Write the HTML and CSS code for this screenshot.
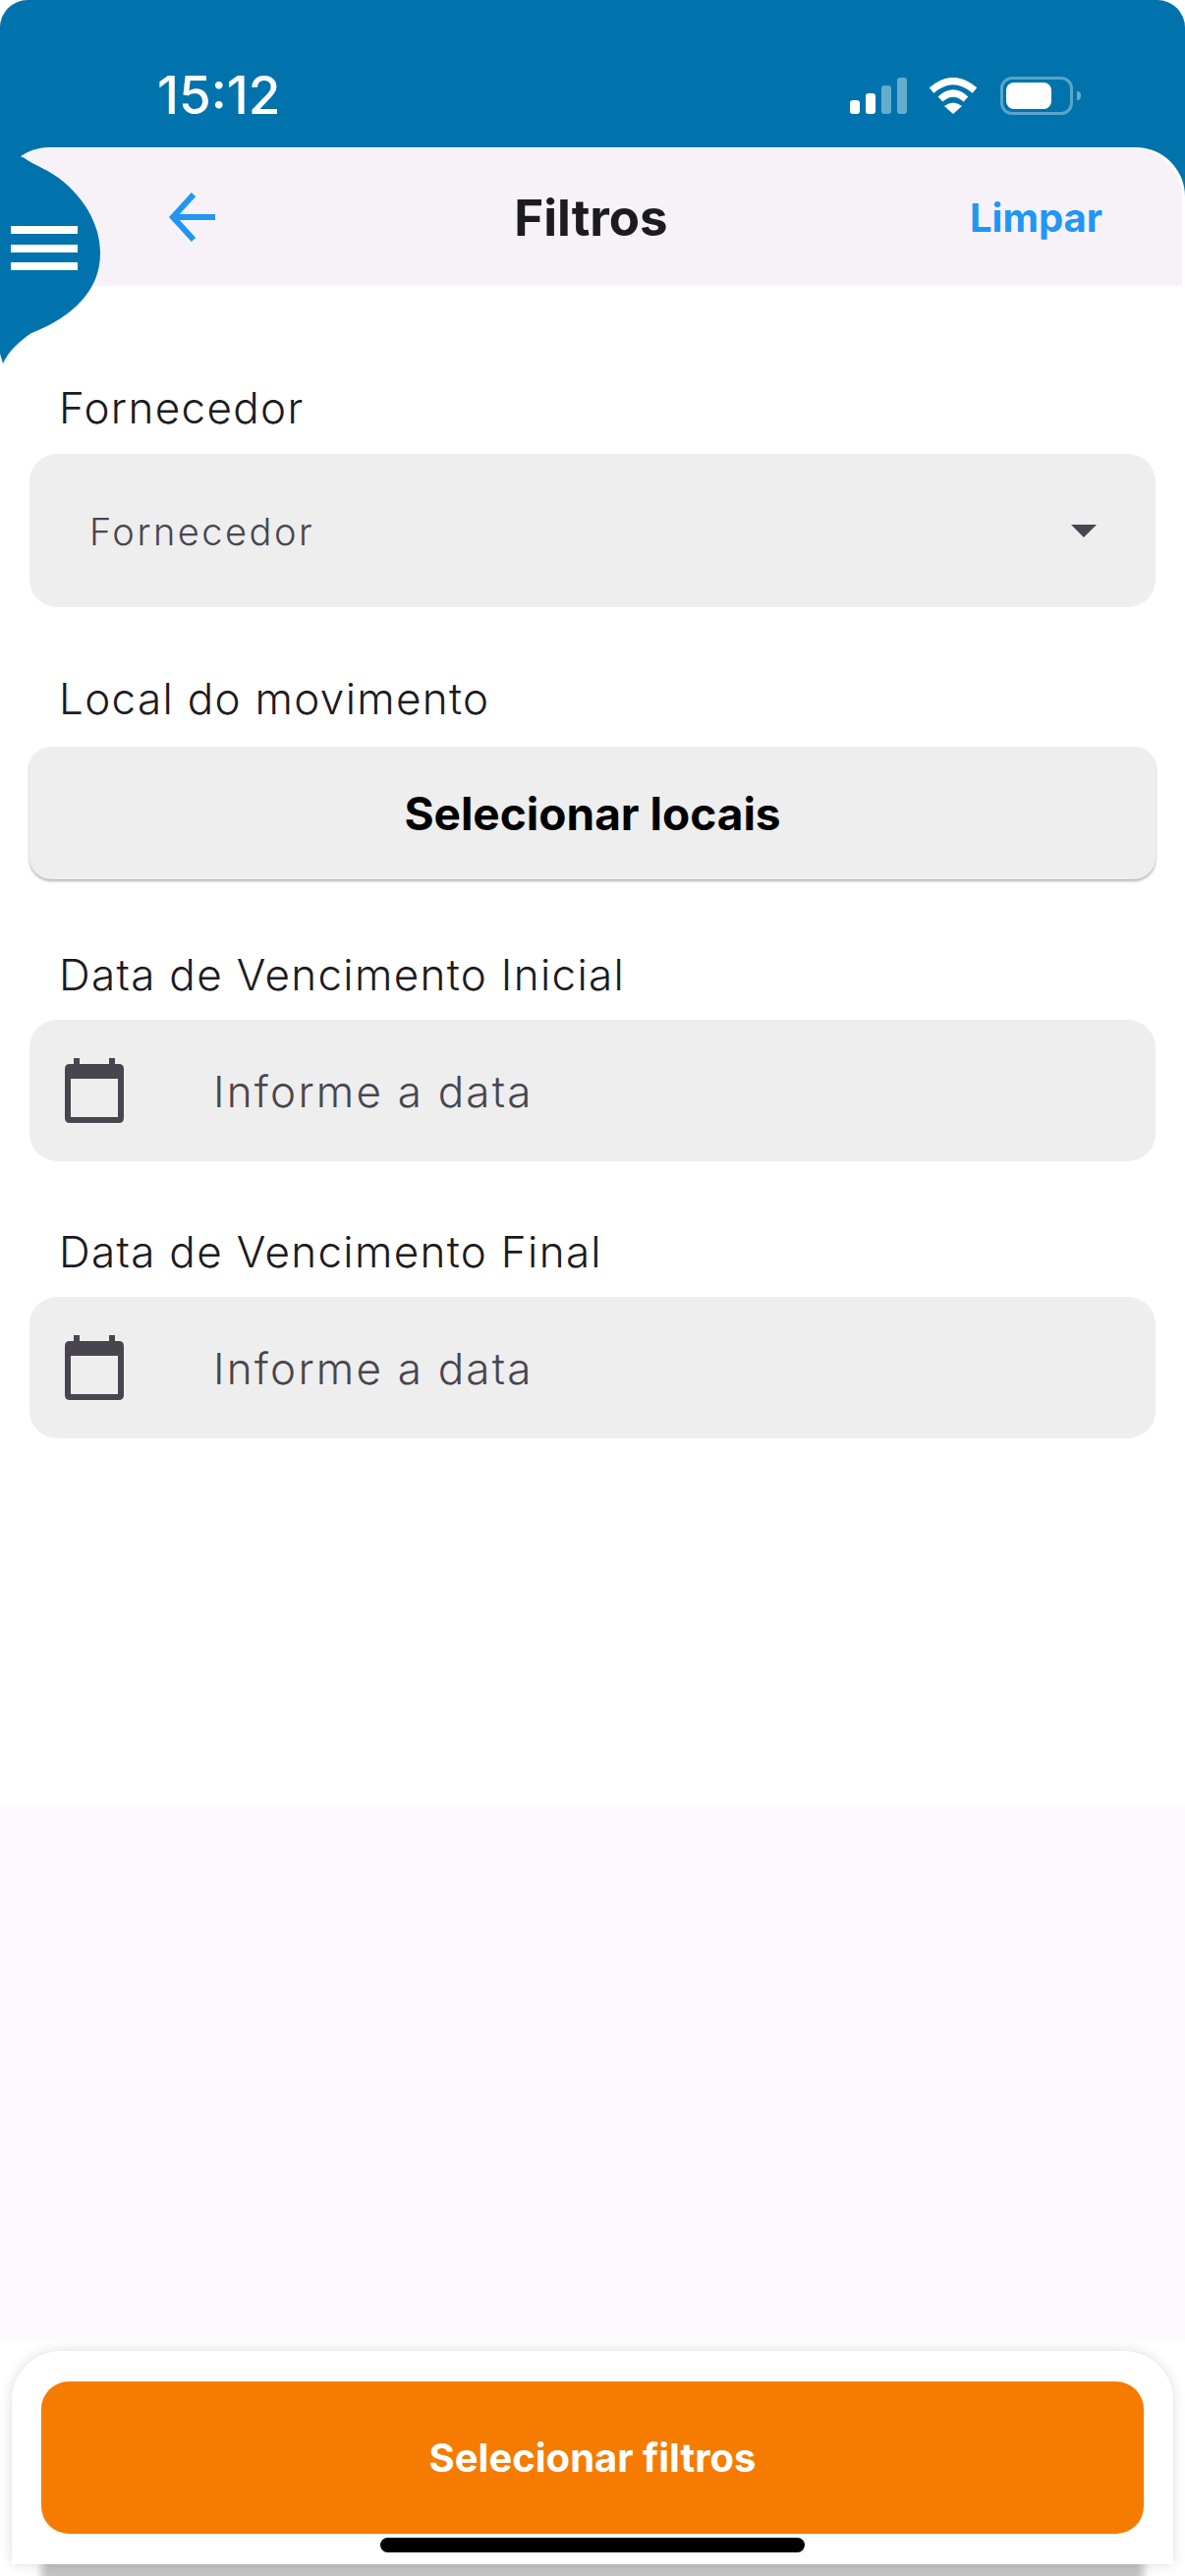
FILE: index.html

```html
<!DOCTYPE html>
<html lang="pt-BR">
<head>
    <meta charset="utf-8">
    <title>Filtros</title>
    <link rel="stylesheet" href="styles.css">
</head>
<body>
    <div class="screen">
        <div class="status-bar">
            <span class="clock">15:12</span>
            <div class="status-icons">
                <svg class="signal" width="58" height="37" viewBox="0 0 58 37">
                    <rect x="0" y="23" width="10" height="14" rx="3" fill="#fff"/>
                    <rect x="16" y="16" width="10" height="21" rx="3" fill="#fff"/>
                    <rect x="32" y="8" width="10" height="29" rx="3" fill="#fff" opacity="0.4"/>
                    <rect x="48" y="0" width="10" height="37" rx="3" fill="#fff" opacity="0.4"/>
                </svg>
                <svg class="wifi" width="50" height="37" viewBox="0 0 50 37">
                    <path d="M3 13 Q25 -6 47 13" fill="none" stroke="#fff" stroke-width="7"/>
                    <path d="M12 22 Q25 10 38 22" fill="none" stroke="#fff" stroke-width="7"/>
                    <path d="M16 29 Q25 22 34 29 L25 37 Z" fill="#fff"/>
                </svg>
                <div class="battery">
                    <div class="battery-body"><div class="battery-level"></div></div>
                    <div class="battery-nub"></div>
                </div>
            </div>
        </div>

        <div class="panel">
            <div class="nav">
                <svg class="back" width="50" height="50" viewBox="0 0 50 50">
                    <path d="M48 25 H5 M26 2 L5 25 L26 48" fill="none" stroke="#2196f3" stroke-width="6"/>
                </svg>
                <h1 class="nav-title">Filtros</h1>
                <span class="nav-action">Limpar</span>
            </div>

            <div class="form">
                <div class="field field-select">
                    <label class="field-label">Fornecedor</label>
                    <div class="box select-box">
                        <span class="placeholder placeholder-small">Fornecedor</span>
                        <span class="caret"></span>
                    </div>
                </div>

                <div class="field field-locais">
                    <label class="field-label">Local do movimento</label>
                    <button class="locais-btn">Selecionar locais</button>
                </div>

                <div class="field field-date">
                    <label class="field-label">Data de Vencimento Inicial</label>
                    <div class="box date-box">
                        <svg class="calendar" width="60" height="66" viewBox="0 0 60 66">
                            <path fill-rule="evenodd" d="M9 0 H15 V6 H45 V0 H51 V6 H55 Q60 6 60 11 V61 Q60 66 55 66 H5 Q0 66 0 61 V11 Q0 6 5 6 H9 Z M6 21 V60 H54 V21 Z" fill="#49454f"/>
                        </svg>
                        <span class="placeholder">Informe a data</span>
                    </div>
                </div>

                <div class="field field-date">
                    <label class="field-label">Data de Vencimento Final</label>
                    <div class="box date-box">
                        <svg class="calendar" width="60" height="66" viewBox="0 0 60 66">
                            <path fill-rule="evenodd" d="M9 0 H15 V6 H45 V0 H51 V6 H55 Q60 6 60 11 V61 Q60 66 55 66 H5 Q0 66 0 61 V11 Q0 6 5 6 H9 Z M6 21 V60 H54 V21 Z" fill="#49454f"/>
                        </svg>
                        <span class="placeholder">Informe a data</span>
                    </div>
                </div>
            </div>

            <div class="filler"></div>

            <div class="footer">
                <div class="sheet">
                    <button class="apply-btn">Selecionar filtros</button>
                </div>
            </div>
        </div>

        <!-- side drawer tab, sits over the nav bar -->
        <svg class="drawer-tab" width="110" height="250" viewBox="0 0 110 250">
            <path d="M0 20 L25 31 C32 37 50 42 67 57 C88 76 102 100 102 128 C102 165 75 192 32 209 C20 217 9 227 3 240 L0 230 Z" fill="#0073ac"/>
            <rect x="11" y="100" width="68" height="8" fill="#fff"/>
            <rect x="11" y="119" width="68" height="8" fill="#fff"/>
            <rect x="11" y="137" width="68" height="8" fill="#fff"/>
        </svg>

        <div class="home-indicator"></div>
    </div>
</body>
</html>
```

FILE: styles.css

```css
* {
    box-sizing: border-box;
}

body {
    margin: 0;
    background: #fff;
    font-family: Inter, "Liberation Sans", sans-serif;
}

.screen {
    position: relative;
    width: 1206px;
    height: 2622px;
    display: flex;
    flex-direction: column;
    overflow: hidden;
    background: #0073ac;
    border-radius: 28px 28px 0 0;
}

/* status bar */
.status-bar {
    height: 150px;
    flex: none;
    padding: 44px 106px 0 160px;
    display: flex;
    align-items: center;
    justify-content: space-between;
    color: #fff;
}

.clock {
    font-size: 53px;
    font-weight: 500;
}

.status-icons {
    display: flex;
    align-items: center;
}

.wifi {
    margin-left: 22px;
}

.battery {
    margin-left: 23px;
    display: flex;
    align-items: center;
}

.battery-body {
    width: 74px;
    height: 39px;
    padding: 3px 3px;
    border: 3px solid rgba(255, 255, 255, 0.35);
    border-radius: 12px;
}

.battery-level {
    width: 46px;
    height: 27px;
    background: #fff;
    border-radius: 8px;
}

.battery-nub {
    width: 4px;
    height: 9px;
    margin-left: 4px;
    background: rgba(255, 255, 255, 0.4);
    border-radius: 0 4px 4px 0;
}

/* main panel */
.panel {
    flex: 1;
    min-height: 0;
    display: flex;
    flex-direction: column;
    background: #fff;
    border-radius: 50px 50px 0 0;
}

.nav {
    position: relative;
    height: 140px;
    flex: none;
    margin-right: 3px;
    margin-top: 1px;
    padding: 0 81px 0 171px;
    display: flex;
    align-items: center;
    justify-content: space-between;
    background: #f6f2f8;
    border-radius: 50px 50px 0 0;
}

.nav-title {
    margin: 0;
    width: 100%;
    position: absolute;
    left: 0;
    text-align: center;
    font-size: 51px;
    font-weight: 700;
    color: #1c1b1f;
}

.nav-action {
    font-size: 40px;
    font-weight: 700;
    color: #2196f3;
}

/* form */
.form {
    height: 1548px;
    flex: none;
    padding: 98px 30px 0;
    display: flex;
    flex-direction: column;
}

.field {
    display: flex;
    flex-direction: column;
}

.field-select {
    gap: 21px;
    margin-bottom: 67px;
}

.field-locais {
    gap: 23px;
    margin-bottom: 71px;
}

.field-date {
    gap: 20px;
    margin-bottom: 66px;
}

.field-label {
    padding-left: 30px;
    font-size: 44px;
    font-weight: 350;
    line-height: 52px;
    letter-spacing: 1.32px;
    color: #1c1b1f;
}

.box {
    display: flex;
    align-items: center;
    background: #eee;
    border-radius: 28px;
}

.select-box {
    height: 156px;
    padding: 0 60px 0 61px;
    justify-content: space-between;
}

.date-box {
    height: 144px;
    padding-left: 36px;
    gap: 91px;
}

.placeholder {
    padding-top: 2px;
    font-size: 44px;
    font-weight: 350;
    letter-spacing: 2.2px;
    color: #49454f;
}

.placeholder-small {
    font-size: 38px;
    letter-spacing: 2.5px;
}

.caret {
    width: 0;
    height: 0;
    border-left: 13px solid transparent;
    border-right: 13px solid transparent;
    border-top: 13px solid #49454f;
}

.locais-btn {
    height: 135px;
    padding: 0;
    border: none;
    background: #eee;
    border-radius: 22px;
    box-shadow: 0 2px 3px rgba(0, 0, 0, 0.3);
    font-family: inherit;
    font-size: 46px;
    font-weight: 700;
    color: #000;
}

.filler {
    flex: 1;
    background: #fdf9ff;
}

/* bottom action sheet */
.footer {
    height: 240px;
    flex: none;
    padding: 11px 12px 12px;
    overflow: hidden;
}

.sheet {
    height: 217px;
    padding: 31px 30px 0;
    background: #fff;
    border-radius: 50px 50px 0 0;
    box-shadow: 0 0 14px rgba(0, 0, 0, 0.14), 0 50px 8px -30px #c4c4c4;
}

.apply-btn {
    display: block;
    width: 100%;
    height: 155px;
    padding: 0;
    border: none;
    background: #f57c00;
    border-radius: 28px;
    font-family: inherit;
    font-size: 40px;
    font-weight: 700;
    color: #fff;
}

.drawer-tab {
    position: absolute;
    top: 130px;
    left: 0;
}

.home-indicator {
    position: absolute;
    left: 387px;
    top: 2583px;
    width: 432px;
    height: 15px;
    background: #000;
    border-radius: 8px;
}
```
